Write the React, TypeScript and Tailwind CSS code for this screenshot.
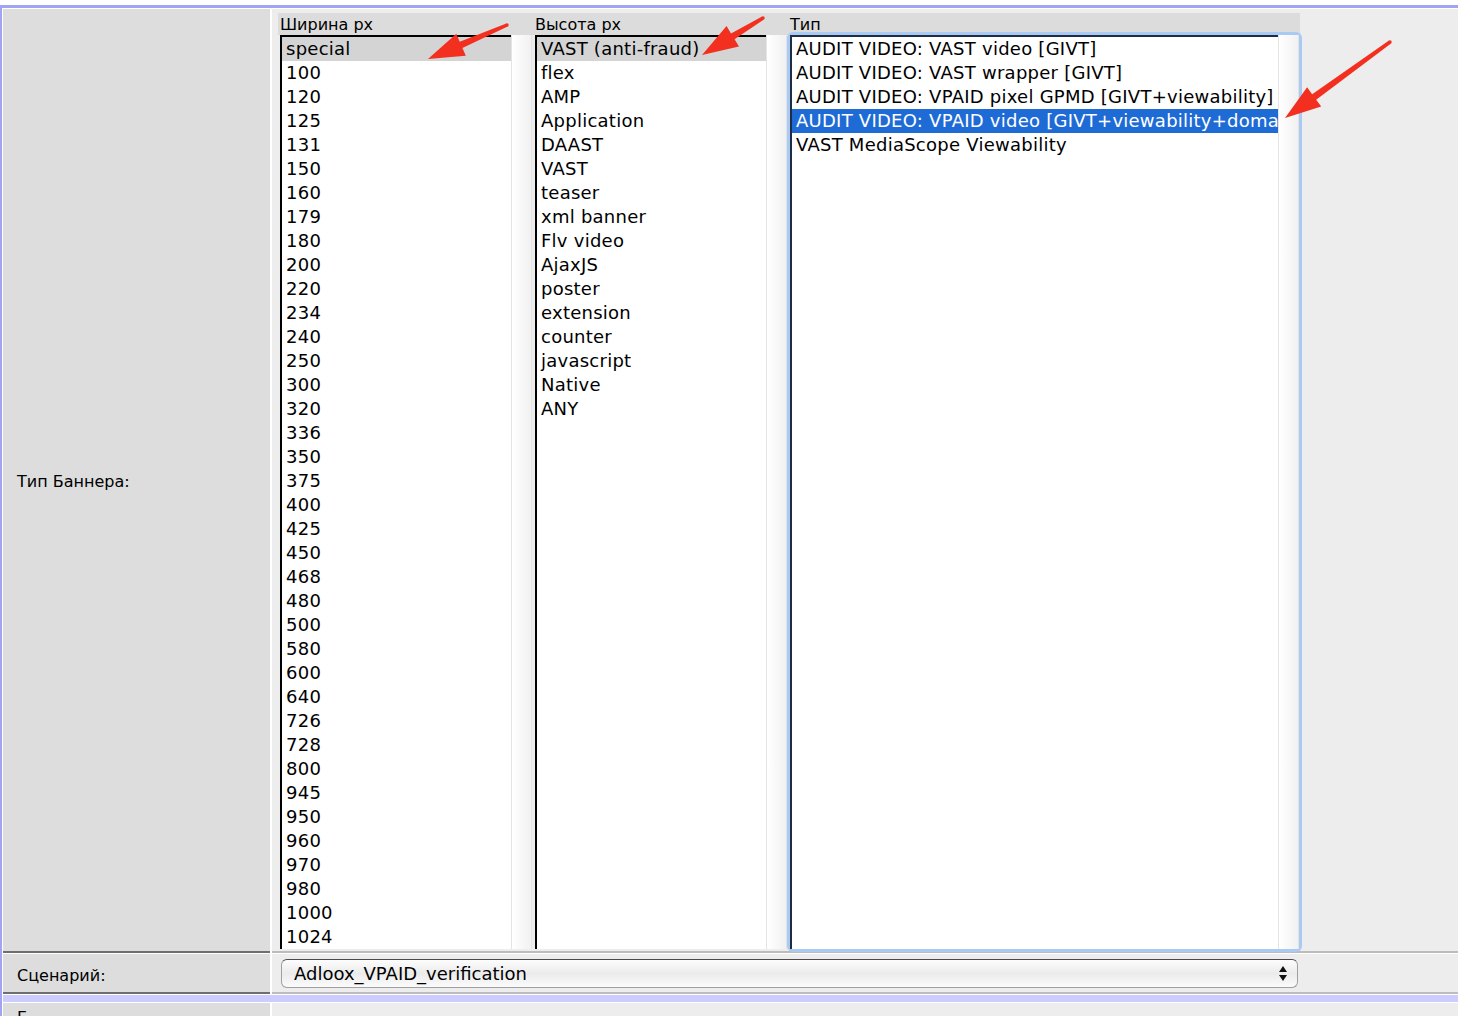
import React from "react";

const widths = [
  "special", "100", "120", "125", "131", "150", "160", "179", "180", "200",
  "220", "234", "240", "250", "300", "320", "336", "350", "375", "400",
  "425", "450", "468", "480", "500", "580", "600", "640", "726", "728",
  "800", "945", "950", "960", "970", "980", "1000", "1024",
];

const heights = [
  "VAST (anti-fraud)", "flex", "AMP", "Application", "DAAST", "VAST", "teaser",
  "xml banner", "Flv video", "AjaxJS", "poster", "extension", "counter",
  "javascript", "Native", "ANY",
];

const kinds = [
  "AUDIT VIDEO: VAST video [GIVT]",
  "AUDIT VIDEO: VAST wrapper [GIVT]",
  "AUDIT VIDEO: VPAID pixel GPMD [GIVT+viewability]",
  "AUDIT VIDEO: VPAID video [GIVT+viewability+domain]",
  "VAST MediaScope Viewability",
];

// red annotation arrows drawn over the screenshot
function arrowPoints(x1: number, y1: number, x2: number, y2: number) {
  const len = Math.hypot(x2 - x1, y2 - y1);
  const dx = (x2 - x1) / len;
  const dy = (y2 - y1) / len;
  const nx = -dy;
  const ny = dx;
  const head = 36;
  const bx = x2 - dx * head;
  const by = y2 - dy * head;
  const p = (x: number, y: number, w: number) => `${x + nx * w},${y + ny * w}`;
  return [
    p(x1, y1, 1.7),
    p(bx, by, 3.4),
    p(bx, by, 12),
    `${x2},${y2}`,
    p(bx, by, -12),
    p(bx, by, -3.4),
    p(x1, y1, -1.7),
  ].join(" ");
}

const arrows = [
  [507, 25, 428, 59],
  [763, 18, 702, 55],
  [1390, 42, 1285, 118],
];

function ListBox({
  items,
  selected,
  selectedBlue,
  focused,
  width,
}: {
  items: string[];
  selected: number;
  selectedBlue?: boolean;
  focused?: boolean;
  width: string;
}) {
  return (
    <div
      className={
        focused
          ? `${width} flex h-[914px] rounded-[3px] shadow-[0_0_0_3px_#a9caf2] bg-white`
          : `${width} flex h-[914px] bg-white`
      }
    >
      <div
        className={
          focused
            ? "flex-1 min-w-0 overflow-hidden border-t-2 border-l-2 border-[#1e2c44]"
            : "flex-1 min-w-0 overflow-hidden border-t-2 border-l-2 border-black"
        }
      >
        {items.map((it, i) => (
          <div
            key={it}
            className={
              i === selected
                ? selectedBlue
                  ? "h-[24px] leading-[23px] pl-[4px] text-[18px] tracking-[0.25px] whitespace-nowrap bg-[#1f6bd6] text-white"
                  : "h-[24px] leading-[23px] pl-[4px] text-[18px] tracking-[0.25px] whitespace-nowrap bg-[#d4d4d4]"
                : "h-[24px] leading-[23px] pl-[4px] text-[18px] tracking-[0.25px] whitespace-nowrap"
            }
          >
            {it}
          </div>
        ))}
      </div>
      <div className="w-[21px] bg-gradient-to-r from-white to-[#f1f1f1] border-l border-r border-[#e4e4e4]" />
    </div>
  );
}

export default function App() {
  return (
    <div className="relative h-[1016px] w-[1458px] overflow-hidden bg-white text-black font-['DejaVu_Sans',Verdana,sans-serif]">
      <div className="mt-[5px] border-t-[3px] border-l-2 border-[#a3a3f3] pt-px pl-px flex flex-col gap-px">
        {/* Тип Баннера */}
        <div className="flex gap-[2px] h-[944px]">
          <div className="w-[267px] bg-[#dddddd] border-b-2 border-[#6e6e6e] flex items-center pl-[14px] pt-[3px] text-[16px]">
            Тип Баннера:
          </div>
          <div className="flex-1 bg-[#ededed] border-b-2 border-[#bcbcbc] pt-[4px] pl-[6px]">
            <div className="w-[1022px]">
              <div className="flex h-[22px] bg-[#dcdcdc] text-[16px] leading-[24px]">
                <div className="w-[255px] pl-[2px]">Ширина px</div>
                <div className="w-[255px] pl-[2px]">Высота px</div>
                <div className="flex-1 pl-[2px]">Тип</div>
              </div>
              <div className="flex">
                <div className="w-[255px] pl-[2px]">
                  <ListBox items={widths} selected={0} width="w-[252px]" />
                </div>
                <div className="w-[255px] pl-[2px]">
                  <ListBox items={heights} selected={0} width="w-[252px]" />
                </div>
                <div className="flex-1 pl-[2px]">
                  <ListBox items={kinds} selected={3} selectedBlue focused width="w-[509px]" />
                </div>
              </div>
            </div>
          </div>
        </div>

        {/* Сценарий */}
        <div className="flex gap-[2px] h-[40px]">
          <div className="w-[267px] bg-[#dddddd] border-b-2 border-[#6e6e6e] flex items-center pl-[14px] pt-[5px] text-[16px]">
            Сценарий:
          </div>
          <div className="flex-1 bg-[#ededed] border-b-2 border-[#bcbcbc] pt-[5px] pl-[9px]">
            <div className="w-[1017px] h-[29px] rounded-[6px] border border-[#a0a0a0] border-t-[#4a4a4a] bg-gradient-to-b from-[#fdfdfd] via-[#ebebeb] to-[#fbfbfb] flex items-center pl-[12px] text-[18px]">
              Adloox_VPAID_verification
              <svg className="ml-auto mr-[10px]" width="8" height="15" viewBox="0 0 8 15">
                <path d="M0 6 L4 0 L8 6 Z M0 9 L8 9 L4 15 Z" fill="#111" />
              </svg>
            </div>
          </div>
        </div>

        <div className="h-[7px] bg-[#ccccff]" />

        <div className="flex gap-[2px] h-[40px]">
          <div className="w-[267px] bg-[#dddddd] pt-[5px] pl-[14px] text-[16px] leading-[19px]">Г</div>
          <div className="flex-1 bg-[#ededed]" />
        </div>
      </div>

      <svg className="absolute inset-0 pointer-events-none" width="1458" height="1016">
        {arrows.map(([x1, y1, x2, y2], i) => (
          <g key={i} fill="#f3301f">
            <polygon points={arrowPoints(x1, y1, x2, y2)} />
            <circle cx={x1} cy={y1} r="1.7" />
          </g>
        ))}
      </svg>
    </div>
  );
}
